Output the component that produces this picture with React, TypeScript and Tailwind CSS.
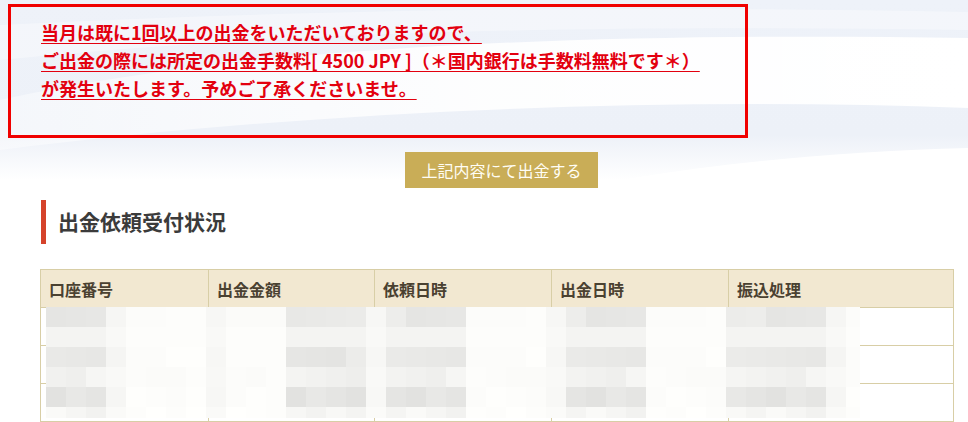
import React from "react";

const notice = [
  "当月は既に1回以上の出金をいただいておりますので、",
  "ご出金の際には所定の出金手数料[ 4500 JPY ]（＊国内銀行は手数料無料です＊）",
  "が発生いたします。予めご了承くださいませ。",
];

const headers = [
  { label: "口座番号", w: "w-[168px]" },
  { label: "出金金額", w: "w-[166px]" },
  { label: "依頼日時", w: "w-[177px]" },
  { label: "出金日時", w: "w-[177px]" },
  { label: "振込処理", w: "w-[225px]" },
];

// mosaic covering the masked rows: g = grey (text), l = light edge, w = blank
const colKinds =
  "gggl" + "wwww" + "lwww" + "gggg" + "l" + "gggg" + "wwww" + "l" + "gggg" + "wwww" + "ggggg" + "l" + "w";

const rowBase = {
  g: [233, 241, 232, 242, 229, 246],
  l: [246, 248, 246, 248, 247, 250],
  w: [252, 252, 253, 252, 253, 254],
} as const;

function shade(kind: "g" | "l" | "w", col: number, row: number) {
  const h = ((col * 73 + row * 151 + col * row * 17) % 9) - 4;
  const v = Math.min(255, rowBase[kind][row] + (kind === "g" ? h : Math.round(h / 3)));
  return `rgb(${v},${v},${Math.max(0, v - 2)})`;
}

function Mosaic() {
  const cells = [];
  for (let r = 0; r < 6; r++) {
    for (let c = 0; c < colKinds.length; c++) {
      const kind = colKinds[c] as "g" | "l" | "w";
      cells.push(<div key={`${r}-${c}`} style={{ backgroundColor: shade(kind, c, r) }} />);
    }
  }
  return (
    <div className="absolute left-[6px] top-[38px] grid w-[814px] h-[111px] grid-cols-[repeat(40,20px)_14px] grid-rows-[repeat(5,20px)_11px]">
      {cells}
    </div>
  );
}

function Waves() {
  return (
    <svg className="absolute left-0 top-0 h-[300px] w-full" viewBox="0 0 968 300" preserveAspectRatio="none">
      <defs>
        <linearGradient id="bg" x1="0" y1="0" x2="0" y2="1">
          <stop offset="0" stopColor="#eef2f9" />
          <stop offset="0.45" stopColor="#edf1f8" />
          <stop offset="0.6" stopColor="#ffffff" />
          <stop offset="1" stopColor="#ffffff" />
        </linearGradient>
        <linearGradient id="fade" x1="0" y1="0" x2="1" y2="0">
          <stop offset="0" stopColor="#ffffff" stopOpacity="0.4" />
          <stop offset="0.5" stopColor="#ffffff" stopOpacity="0.9" />
          <stop offset="1" stopColor="#ffffff" stopOpacity="1" />
        </linearGradient>
      </defs>
      <rect x="0" y="0" width="968" height="300" fill="url(#bg)" />
      <path d="M0,100 C250,45 600,32 968,38 L968,108 C650,96 300,112 0,150 Z" fill="url(#fade)" />
      <path d="M0,25 C300,10 600,5 968,12 L968,30 C600,25 300,30 0,60 Z" fill="#ffffff" opacity="0.35" />
      <path d="M250,300 C450,190 720,155 968,148 L968,300 Z" fill="#ffffff" />
    </svg>
  );
}

export default function App() {
  return (
    <div className="relative min-h-[422px] w-full overflow-hidden bg-white font-['Noto_Sans_CJK_JP','Noto_Sans',sans-serif]">
      <Waves />
      <div className="relative">
        <div className="ml-[8px] mt-[4px] h-[134px] w-[740px] border-[3px] border-[#f00000] pl-[30px] pt-[11px]">
          {notice.map((line) => (
            <p key={line} className="text-[18px] font-bold leading-[28px] text-[#e3000f]">
              <span className="underline decoration-1 underline-offset-[3px]">{line}</span>
            </p>
          ))}
        </div>

        <div className="mt-[14px] flex justify-center pl-[35px]">
          <button className="h-[36px] w-[193px] bg-[#c9ad57] text-[16px] text-[#fffdf4]">
            上記内容にて出金する
          </button>
        </div>

        <h2 className="ml-[41px] mt-[12px] flex h-[44px] items-center border-l-[5px] border-[#d5432b] pl-[12px] text-[21px] font-bold text-[#3b3b3b]">
          出金依頼受付状況
        </h2>

        <div className="relative ml-[40px] mt-[25px] w-[913px]">
          <table className="w-[913px] table-fixed border-collapse">
            <thead>
              <tr>
                {headers.map((h) => (
                  <th
                    key={h.label}
                    className={`${h.w} h-[38px] border border-[#d8cea6] bg-[#f2e8d1] px-[8px] text-left text-[16px] font-bold text-[#4a4131]`}
                  >
                    {h.label}
                  </th>
                ))}
              </tr>
            </thead>
            <tbody>
              {[0, 1, 2].map((r) => (
                <tr key={r}>
                  {headers.map((h) => (
                    <td key={h.label} className="h-[38px] border border-[#d8cea6] bg-white" />
                  ))}
                </tr>
              ))}
            </tbody>
          </table>
          <Mosaic />
        </div>
      </div>
    </div>
  );
}
